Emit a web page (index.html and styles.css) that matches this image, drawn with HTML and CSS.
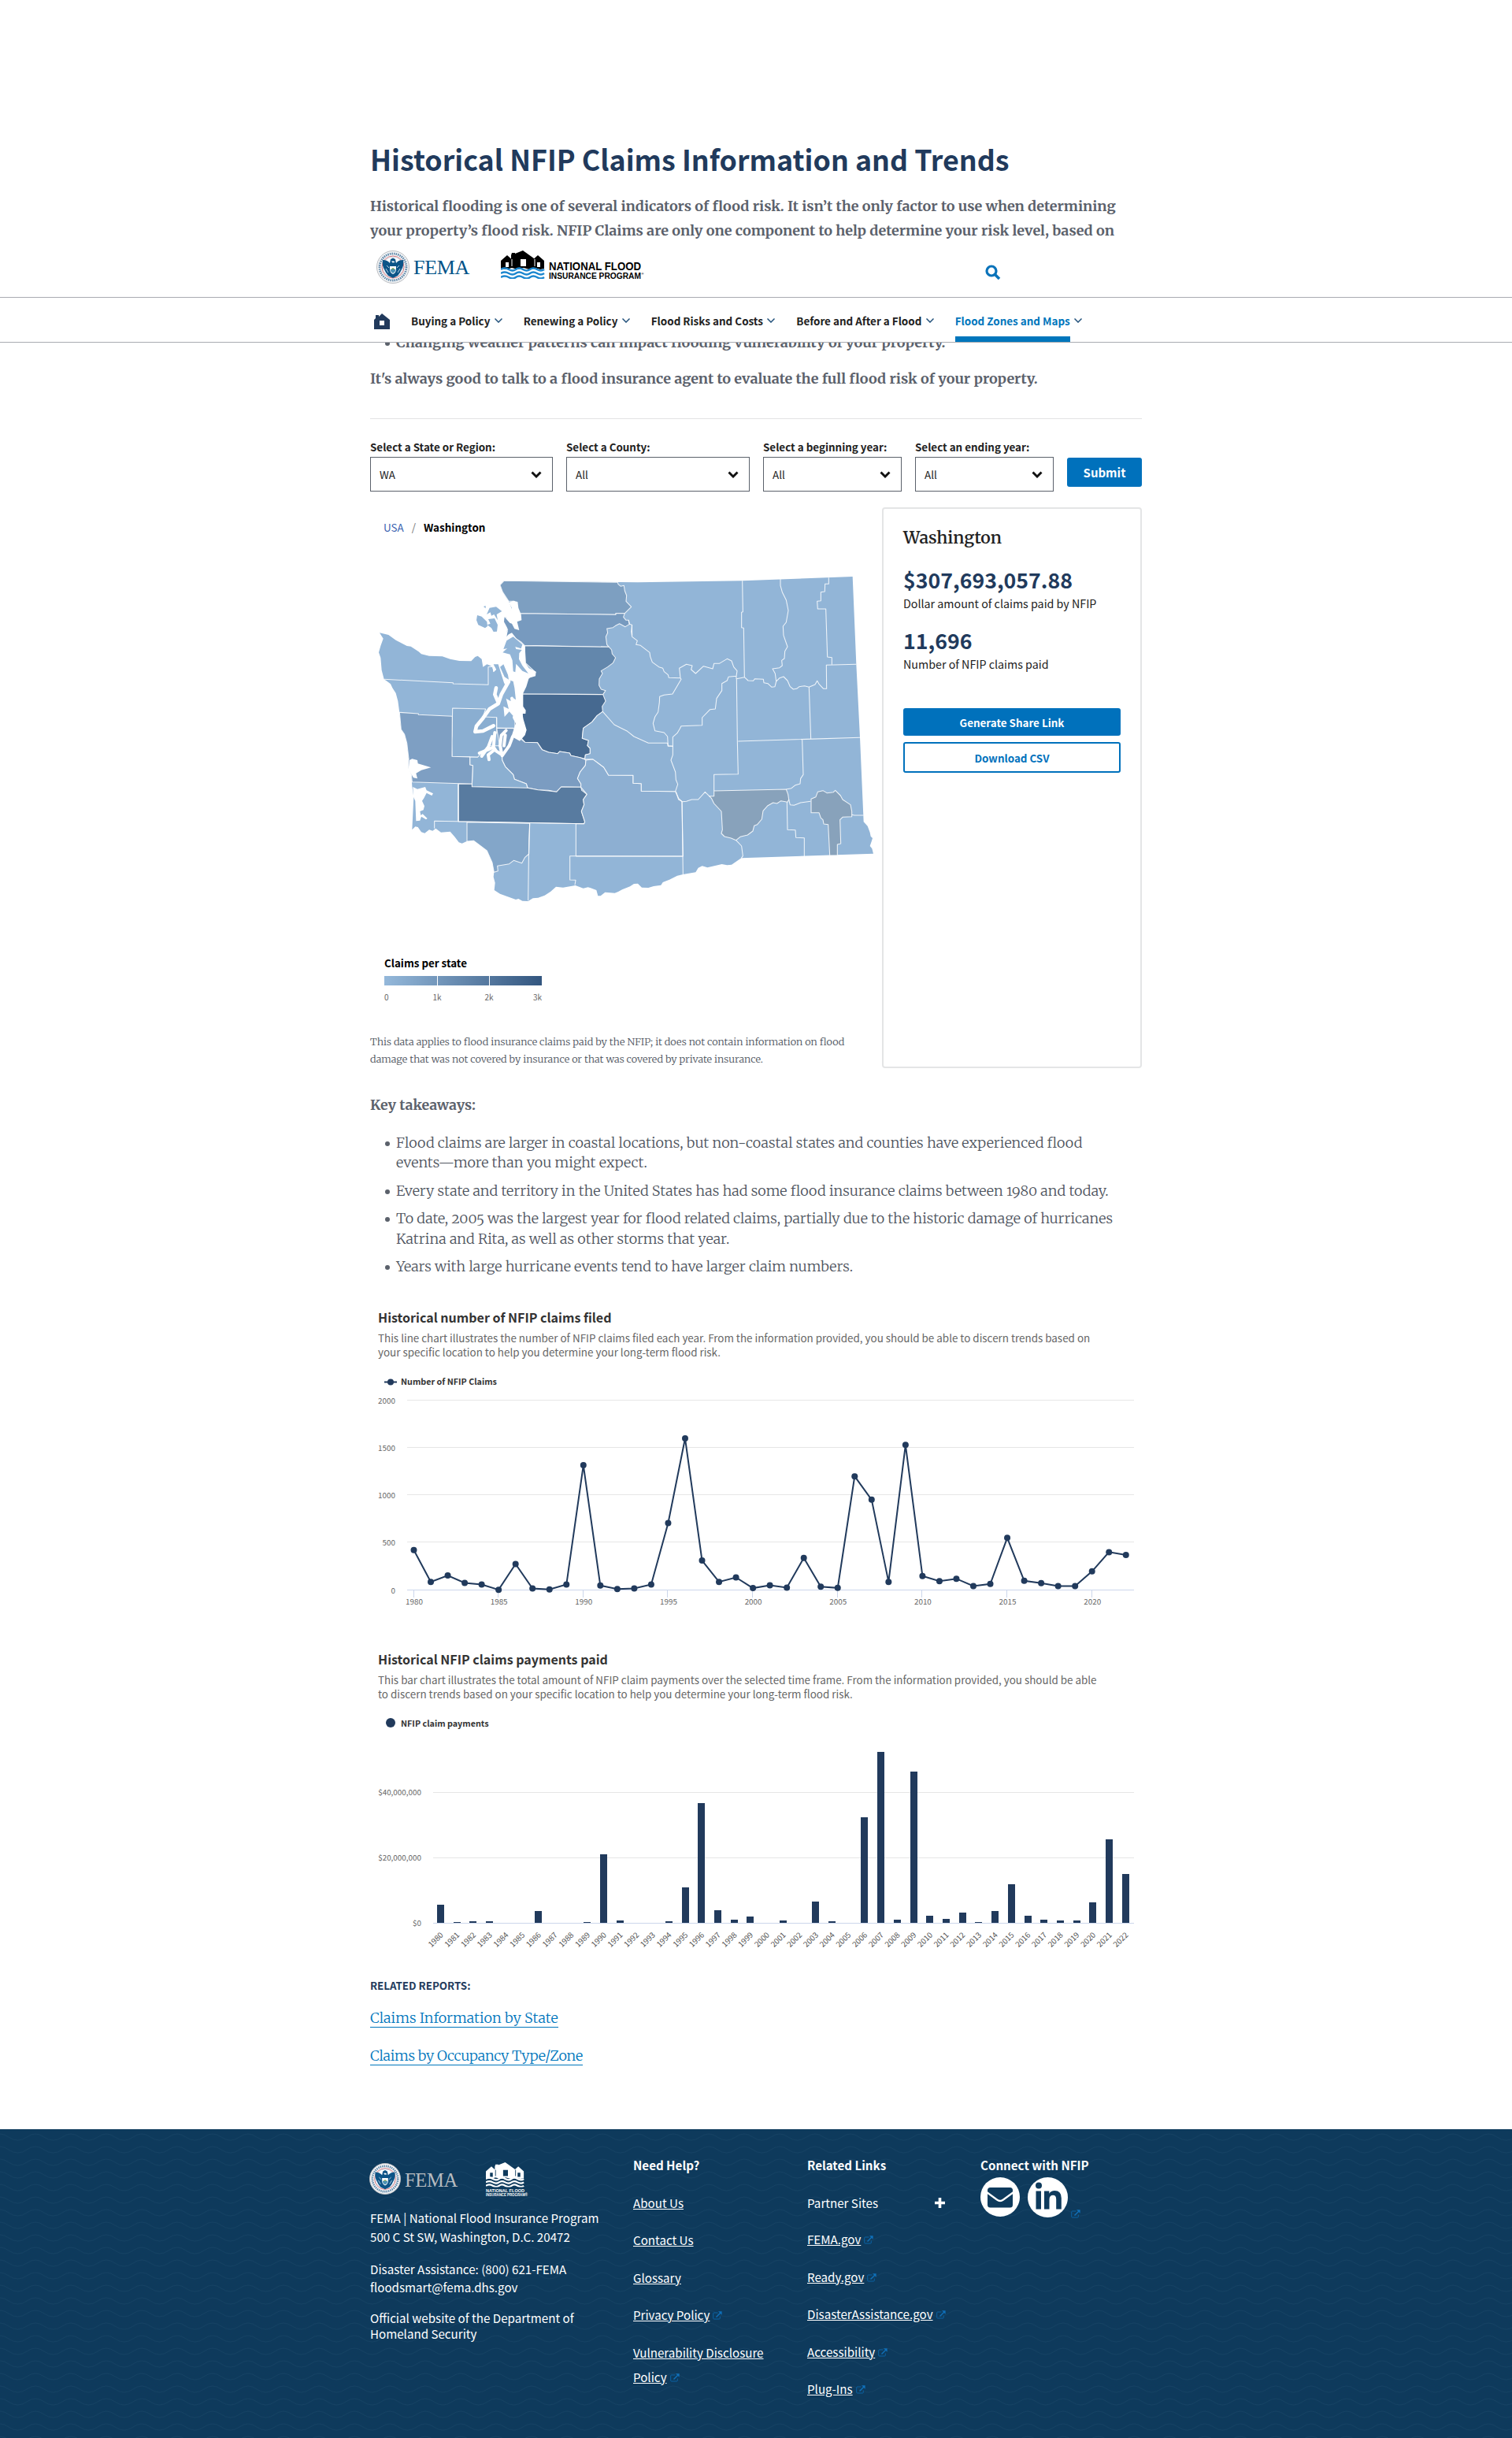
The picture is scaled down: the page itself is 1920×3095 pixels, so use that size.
FILE: index.html
```html
<!DOCTYPE html>
<html lang="en">
<head>
<meta charset="utf-8">
<title>Historical NFIP Claims Information and Trends</title>
<link rel="stylesheet" href="styles.css">
</head>
<body>
<svg width="0" height="0" class="defs" aria-hidden="true">
  <defs>
    <symbol id="seal" viewBox="0 0 42 42">
      <circle cx="21" cy="21" r="20.500" fill="#f4f5f6" stroke="#b9bcc0"/>
      <circle cx="21" cy="21" r="17" fill="none" stroke="#5d86a8" stroke-width="2.800" stroke-dasharray="1.500 1.100"/>
      <circle cx="21" cy="21" r="14" fill="#fff" stroke="#d0545c" stroke-width=".8"/>
      <circle cx="21" cy="21" r="12.800" fill="#fff" stroke="#8fb0c8" stroke-width=".5"/>
      <path d="M8 12q6 0 9 4l1-5 3-1.500 3 1.500 1 5q3-4 9-4 1 6-1 10l-3 6-3 4-6 3-6-3-3-4-3-6q-2-4-1-10z" fill="#0c5487"/>
      <path d="M12 23l3 5M30 23l-3 5M13 19l3 3M29 19l-3 3" stroke="#c7dbe8" stroke-width=".9"/>
      <path d="M17 20h8v5q-1 4-4 5-3-1-4-5z" fill="#fff"/>
      <path d="M17.500 24h7l-1 3-2.500 2-2.500-2z" fill="#4b92b5"/>
      <path d="M18.500 24l2.500-2 2.500 2z" fill="#6f9a4e"/>
      <path d="M19 13.500h3l1.500 1.500-3 .5z" fill="#fff"/>
    </symbol>
    <symbol id="houses" viewBox="0 0 56 36">
      <path d="M0 23V13l8-7 5 4.500V6l1-3h4v1l10-4 14 10v.5l5-4.500 8 7v10l-5 1-7-2-7 2-7-2-8 2-7-2-7 2z" fill="var(--ink)"/>
      <path d="M14 11v9M43 11v9" stroke="var(--gap)" stroke-width="1"/>
      <path d="M25 11h7v9h-7zM6 15h4v6H6zM46 15h4v6h-4z" fill="var(--gap)"/>
      <g fill="none" stroke="var(--wave)" stroke-width="2.500">
        <path d="M0 24q5-3 10 0t9 0 9 0 9 0 9 0 9 0"/>
        <path d="M0 29q5-3 10 0t9 0 9 0 9 0 9 0 9 0"/>
        <path d="M0 34q5-3 10 0t9 0 9 0 9 0 9 0 9 0"/>
      </g>
    </symbol>
    <symbol id="chev" viewBox="0 0 10 6"><path d="M.5.5L5 5 9.500.5" fill="none" stroke="#23527c" stroke-width="1.500"/></symbol>
    <symbol id="caret" viewBox="0 0 14 9"><path d="M1.500 1.500L7 7l5.500-5.500" fill="none" stroke="#111" stroke-width="2.900"/></symbol>
    <symbol id="ext" viewBox="0 0 12 11"><path d="M6.500 2H1.700Q.7 2 .7 3v6q0 1 1 1h6.600q1 0 1-1V6.500" fill="none" stroke="#0b62a3" stroke-width="1"/><path d="M4.500 7.500L10 2" stroke="#0f70ba" stroke-width="1.400"/><path d="M7 .2h4.600v4.600z" fill="#0f70ba"/></symbol>
  </defs>
</svg>

<header class="site-header">
  <div class="brand">
    <svg class="seal"><use href="#seal"/></svg>
    <span class="fema">FEMA</span>
    <svg class="houses"><use href="#houses"/></svg>
    <svg class="nfip" width="124" height="26"><text x="0" y="11.500" font-size="15" textLength="117" lengthAdjust="spacingAndGlyphs">NATIONAL FLOOD</text><text x="0" y="22.500" font-size="10.600" textLength="117" lengthAdjust="spacingAndGlyphs">INSURANCE PROGRAM</text><text x="117.500" y="18" font-size="4">®</text></svg>
    <svg class="search" viewBox="0 0 20 20"><circle cx="8" cy="8" r="6" fill="none" stroke="#0a73ba" stroke-width="3.200"/><path d="M12.500 12.500l5.500 5.500" stroke="#0a73ba" stroke-width="3.600"/></svg>
  </div>
  <nav class="nav">
    <svg class="home" viewBox="0 0 20 20"><path d="M0 20V8l2-2V2h4v2l4-4 10 8v12zM7 9v6h6V9z" fill="#213a5c" fill-rule="evenodd"/></svg>
    <a>Buying a Policy</a><svg class="chev"><use href="#chev"/></svg>
    <a>Renewing a Policy</a><svg class="chev"><use href="#chev"/></svg>
    <a>Flood Risks and Costs</a><svg class="chev"><use href="#chev"/></svg>
    <a>Before and After a Flood</a><svg class="chev"><use href="#chev"/></svg>
    <a class="active">Flood Zones and Maps</a><svg class="chev"><use href="#chev"/></svg>
  </nav>
</header>

<main class="page">
  <h1>Historical NFIP Claims Information and Trends</h1>
  <p class="intro">Historical flooding is one of several indicators of flood risk. It isn’t the only factor to use when determining<br>your property’s flood risk. NFIP Claims are only one component to help determine your risk level, based on</p>
  <ul class="factors"><li>Changing weather patterns can impact flooding vulnerability of your property.</li></ul>
  <p class="intro">It's always good to talk to a flood insurance agent to evaluate the full flood risk of your property.</p>
  <hr>

  <form class="filters">
    <label>Select a State or Region:<span class="select">WA<svg><use href="#caret"/></svg></span></label>
    <label>Select a County:<span class="select">All<svg><use href="#caret"/></svg></span></label>
    <label>Select a beginning year:<span class="select">All<svg><use href="#caret"/></svg></span></label>
    <label>Select an ending year:<span class="select">All<svg><use href="#caret"/></svg></span></label>
    <button type="button" class="submit">Submit</button>
  </form>

  <section class="explorer">
    <div class="map-side">
      <div class="crumbs"><a>USA</a><i>/</i><b>Washington</b></div>
      <svg class="map" viewBox="0 0 1950 1380">
        <path class="c0" stroke="none" d="M510 112L1020 118 1418 112 1838 96 1852 430 1866 709 1880 1030 1895 1046 1904 1070 1907 1085 1914 1092 1910 1105 1904 1122 1912 1132 1917 1151 1414 1168 1377 1193 1360 1195 1340 1191 1285 1204 1265 1198 1250 1205 1240 1222 1192 1230 1170 1235 1140 1250 1115 1260 1108 1271 1080 1275 1060 1281 1035 1280 1020 1265 1005 1266 990 1276 960 1288 945 1296 932 1301 895 1298 878 1312 868 1312 862 1290 840 1282 830 1279 812 1283 782 1272 752 1277 735 1280 708 1277 688 1295 665 1310 640 1319 620 1321 602 1332 580 1331 565 1323 555 1326 495 1304 473 1290 476 1262 470 1240 472 1222 468 1188 445 1140 420 1117 395 1102 368 1104 350 1112 338 1108 322 1087 305 1067 270 1070 250 1055 238 1064 225 1060 208 1073 195 1069 182 1050 172 1048 160 1060 166 935 160 895 157 850 146 825 147 790 140 730 131 697 118 678 112 615 106 570 98 540 85 520 78 505 65 495 53 487 44 452 40 405 33 385 40 360 50 332 36 310 70 318 98 338 140 360 155 362 185 382 195 391 225 398 275 400 305 410 340 417 385 418 400 402 410 398 425 410 430 440 445 430 465 438 470 460 480 450 470 430 490 430 500 410 505 350 525 325 520 300 510 262 540 220 528 190 520 180 505 155 495 128z"/>
        <g class="counties">
          <path fill="#7d9fc1" d="M510 112L943 118 945 125 955 133 967 130 970 150 977 168 975 190 995 211 970 236 936 236 936 241 566 236 550 190 528 190 505 155 495 128z"/>
          <path fill="#779abf" d="M566 236L936 241 936 236 970 236 965 250 975 262 985 262 988 277 972 287 950 275 935 283 925 290 902 294 905 310 898 325 902 355 910 364 588 358 575 345 545 325 520 320 525 300 510 262 540 270z"/>
          <path fill="#6387ac" d="M588 359L910 364 920 375 922 390 935 405 925 425 905 440 880 455 885 465 873 485 872 510 880 525 897 530 887 545 580 543 583 500 605 482 630 460 592 425 590 390z"/>
          <path fill="#466990" d="M580 543L887 545 897 570 884 590 886 610 865 625 845 650 812 673 808 712 832 720 828 740 838 750 838 770 820 775 818 790 800 785 765 778 760 768 722 762 715 770 680 765 655 755 637 728 590 727 575 710 550 705 552 640 580 640z"/>
          <path fill="#7b9cc1" d="M575 715L590 727 637 728 655 755 680 765 715 770 722 762 760 768 765 778 800 785 818 792 822 795 820 815 800 840 790 865 803 885 803 898 728 897 710 916 680 910 640 908 600 900 595 885 550 868 545 850 515 820 503 795 503 780 490 720 482 673 548 674z"/>
          <path fill="#8bafd1" d="M380 783L410 783 440 740 500 740 503 795 515 820 545 850 550 868 595 885 600 902 388 896 391 815 380 813z"/>
          <path fill="#8aaed1" d="M314 597L440 600 430 630 482 632 482 690 450 740 410 783 312 781 310 720 312 700z"/>
          <path fill="#7e9fc3" d="M112 613L184 618 184 622 313 628 312 781 380 783 380 813 391 815 388 886 160 878 157 850 146 825 147 790 140 730 131 697 118 678z"/>
          <path fill="#587ba0" d="M337 886L388 886 388 896 600 901 640 908 680 912 710 916 728 897 803 898 806 910 826 925 812 945 815 965 805 990 818 1030 815 1037 337 1029z"/>
          <path fill="#83a6c9" d="M369 1031L608 1036 605 1152 590 1165 578 1187 547 1177 530 1190 485 1198 487 1217 472 1222 465 1185 445 1140 395 1102 369 1104z"/>
          <path fill="#8dafd2" d="M822 795L848 791 890 822 908 852 1002 853 1002 883 1033 884 1033 913 1163 914 1175 940 1188 953 1192 1161 784 1160 784 1037 815 1037 818 1030 805 990 815 965 812 945 826 925 803 898 803 885 790 865 800 840 820 815z"/>
          <path fill="#8fb2d4" d="M886 610L930 660 960 675 980 685 1005 705 1020 712 1060 730 1133 730 1135 742 1153 742 1153 775 1146 795 1163 840 1165 870 1172 887 1163 914 1033 913 1033 884 1002 883 1002 853 908 852 890 822 848 791 818 792 820 775 838 770 838 750 828 740 832 720 808 712 812 673 845 650 865 625z"/>
          <g transform="translate(930)" fill="#88a2bb">
            <path d="M362 932L380 932 380 912 655 906 662 925 665 945 660 955 635 950 620 960 605 957 585 968 567 988 562 1020 545 1040 533 1045 528 1065 508 1080 480 1087 464 1100 445 1092 420 1086 408 1074 412 1060 408 990 380 960 370 940z"/>
            <path d="M750 943L768 935 775 916 795 911 810 920 835 917 842 910 862 930 870 945 900 965 905 990 905 1010 870 1012 860 1022 863 1113 850 1116 850 1157 821 1158 815 1040 798 1038 795 1022 787 1015 780 995 750 995z"/>
          </g>
        </g>
        <g class="lines">
          <path d="M53 487L316 500 316 504 450 508 450 440 465 438M335 886V1028M245 1055V1027L815 1037M608 1036L605 1100 602 1330M784 1160H761V1251L783 1252 780 1270M482 632V673H548M984 262L988 277 997 280 998 320"/>
          <g transform="translate(930)">
            <path d="M68 280L65 305 68 325 88 340 83 355 100 358 135 385 137 400 145 422 170 440 185 445 190 458 205 470 208 481 252 482M488 112L490 230 485 232 485 290 493 292 496 479 466 485 469 722 472 848 380 850V912"/>
            <path d="M633 105V130L640 155 655 185 663 225 655 270 643 285 645 320 660 363 650 380 648 408 638 415 640 435 630 443 603 447 613 465 617 495 612 515 600 517 585 503 570 500 568 487 535 485 530 493 510 492 496 479M617 495L630 482 645 477 660 492 670 515 682 525 695 523 705 515 725 512 742 517 765 507 773 493 780 505 797 523H809L808 433 922 430M742 517L749 715M472 723L936 709M716 718L720 850 710 865 708 885 690 890 675 902 655 906"/>
            <path d="M817 100V124H803L802 153 787 155V188L773 190 775 219H806L812 402 829 404V431"/>
            <path d="M252 482L248 445 275 430 297 435 293 450 310 465 340 437 375 447 380 427 400 427 430 409 447 417 455 440 468 455 465 475 435 478 430 492 410 503 410 530 390 560 385 600 365 602 335 633 335 662 255 665 250 675 240 692 223 707 223 742 205 740 203 705 190 690 155 683 148 655 155 630 167 612 172 575 173 553 190 547 222 543 240 512 255 487zM465 475V485M235 915L245 945 260 953 275 952 295 945 320 945 346 916 365 935M258 953L262 1230M262 1161H-146M464 1100L485 1122 490 1160 484 1168M658 955L660 1060 690 1061 692 1090 724 1091V1162M665 945L670 965 685 967 710 957 748 952M905 1003L915 1005H950"/>
          </g>
        </g>
        <g fill="#fff">
          <path d="M528 195L545 188 562 192 565 215 575 240 577 262 560 268 568 300 550 295 540 275 525 270 510 262 520 250 495 245 525 235 508 205 520 203 535 225 540 215z"/>
          <path d="M485 290L520 270 522 300 515 322 540 310 560 335 590 360 592 425 605 445 632 458 630 475 605 482 595 515 583 540 583 590 593 605 592 618 580 618 584 640 596 680 590 700 570 722 545 708 540 700 556 650 550 632 530 610 512 630 508 590 528 600 518 560 535 570 540 555 555 565 550 520 545 495 530 490 520 520 510 500 488 430 495 405 470 420 455 400 430 408 425 330z"/>
          <path d="M150 795L160 790 180 795 182 808 232 823 195 833 175 845 180 865 165 862 155 845 146 830z"/>
          <path d="M163 897L180 905 210 897 215 910 240 922 235 930 215 920 205 940 198 950 207 970 203 985 190 990 193 1005 200 1000 218 1017 213 1021 195 1010 190 1025 175 1027 172 950 165 935z"/>
          <path d="M455 440L465 435 470 460 480 450 475 440z"/>
        </g>
        <g fill="none" stroke="#fff" stroke-linejoin="round" stroke-linecap="round">
          <path stroke-width="14" d="M528 495L500 545 488 580 455 600 430 635 405 665 400 687 430 684 470 664M488 575L475 545 480 520M550 632L565 660 575 690"/>
          <path stroke-width="12" d="M543 705L530 740 503 778 495 740 500 700 518 682M503 775L480 760 470 745 475 690M470 745L450 755 416 768M470 758L450 775 453 793M465 705L450 745 425 780M515 700L510 740M540 560L560 610"/>
        </g>
        <g class="c0">
          <path d="M505 385L530 362 552 360 556 372 578 375 568 388 567 410 580 435 603 465 580 455 556 428 553 460 545 457 542 415 533 392z"/>
          <path d="M508 372L520 340 545 325 580 355 575 370 550 362 530 368z"/>
          <path d="M495 440L508 430 525 470 528 488 512 478z"/>
          <path d="M408 243L425 248 445 268 447 285 438 292 412 280 405 262zM455 215L480 211 502 228 482 240 486 262 472 240 462 245 458 232 444 240zM450 258L474 255 486 280 483 305 470 306 462 292 446 280 458 275zM432 210L440 207 440 217z"/>
          <path fill="#779abf" d="M512 250L530 270 545 300 535 305 520 325 526 298 510 268z"/>
        </g>
      </svg>
      <div class="legend-title">Claims per state</div>
      <div class="legend-bar"><span></span><span></span><span></span></div>
      <div class="legend-ticks"><span>0</span><span>1k</span><span>2k</span><span>3k</span></div>
      <p class="note">This data applies to flood insurance claims paid by the NFIP; it does not contain information on flood<br>damage that was not covered by insurance or that was covered by private insurance.</p>
    </div>
    <aside class="card">
      <h2>Washington</h2>
      <div class="stat">$307,693,057.88</div><div class="cap">Dollar amount of claims paid by NFIP</div>
      <div class="stat">11,696</div><div class="cap">Number of NFIP claims paid</div>
      <button type="button" class="btn">Generate Share Link</button>
      <button type="button" class="btn outline">Download CSV</button>
    </aside>
  </section>

  <p class="key">Key takeaways:</p>
  <ul class="takeaways">
    <li>Flood claims are larger in coastal locations, but non-coastal states and counties have experienced flood<br>events—more than you might expect.</li>
    <li>Every state and territory in the United States has had some flood insurance claims between 1980 and today.</li>
    <li>To date, 2005 was the largest year for flood related claims, partially due to the historic damage of hurricanes<br>Katrina and Rita, as well as other storms that year.</li>
    <li>Years with large hurricane events tend to have larger claim numbers.</li>
  </ul>

  <section class="chart">
    <h3>Historical number of NFIP claims filed</h3>
    <p>This line chart illustrates the number of NFIP claims filed each year. From the information provided, you should be able to discern trends based on<br>your specific location to help you determine your long-term flood risk.</p>
    <svg id="line-chart" width="980" height="310"></svg>
  </section>
  <section class="chart second">
    <h3>Historical NFIP claims payments paid</h3>
    <p>This bar chart illustrates the total amount of NFIP claim payments over the selected time frame. From the information provided, you should be able<br>to discern trends based on your specific location to help you determine your long-term flood risk.</p>
    <svg id="bar-chart" width="980" height="320"></svg>
  </section>

  <h4>RELATED REPORTS:</h4>
  <div class="reports"><a>Claims Information by State</a><a>Claims by Occupancy Type/Zone</a></div>
</main>

<footer class="footer">
  <svg class="waves" width="100%" height="100%" aria-hidden="true"><defs><pattern id="w" width="45" height="16" patternUnits="userSpaceOnUse"><path d="M0 6q5.500 0 11 4t11.500 4 11.500-4 11-4" fill="none" stroke="#154263" stroke-width="1"/></pattern></defs><rect width="100%" height="100%" fill="url(#w)"/></svg>
  <div class="footer-grid">
    <div class="about">
      <div class="footer-logos">
        <svg class="seal"><use href="#seal"/></svg><span class="fema">FEMA</span>
        <svg class="nfip-stack" viewBox="0 0 56 43" width="56" height="43"><use href="#houses" width="49" height="31.500"/><text x="0" y="37.500" font-size="6" textLength="49" lengthAdjust="spacingAndGlyphs">NATIONAL FLOOD</text><text x="0" y="42.500" font-size="4.600" textLength="53" lengthAdjust="spacingAndGlyphs">INSURANCE PROGRAM®</text></svg>
      </div>
      <p class="l24">FEMA | National Flood Insurance Program<br>500 C St SW, Washington, D.C. 20472</p>
      <p class="l23">Disaster Assistance: (800) 621-FEMA<br>floodsmart@fema.dhs.gov</p>
      <p class="l20">Official website of the Department of<br>Homeland Security</p>
    </div>
    <div class="col">
      <b>Need Help?</b>
      <div><a>About Us</a></div><div><a>Contact Us</a></div><div><a>Glossary</a></div>
      <div><a>Privacy Policy</a><svg class="ext"><use href="#ext"/></svg></div>
      <div><a>Vulnerability Disclosure<br>Policy</a><svg class="ext"><use href="#ext"/></svg></div>
    </div>
    <div class="col">
      <b>Related Links</b>
      <div class="partner">Partner Sites<svg viewBox="0 0 13 13" width="13" height="13"><path d="M6.500 0v13M0 6.500h13" stroke="#fff" stroke-width="3.600"/></svg></div>
      <div><a>FEMA.gov</a><svg class="ext"><use href="#ext"/></svg></div>
      <div><a>Ready.gov</a><svg class="ext"><use href="#ext"/></svg></div>
      <div><a>DisasterAssistance.gov</a><svg class="ext"><use href="#ext"/></svg></div>
      <div><a>Accessibility</a><svg class="ext"><use href="#ext"/></svg></div>
      <div><a>Plug-Ins</a><svg class="ext"><use href="#ext"/></svg></div>
    </div>
    <div class="connect">
      <b>Connect with NFIP</b>
      <div class="social">
        <svg viewBox="0 0 50 50" width="50" height="50"><circle cx="25" cy="25" r="25" fill="#fff"/><rect x="9" y="13" width="32" height="25.500" rx="3.500" fill="#0e3a5c"/><path d="M8 19l13 9.500q4 3 8 0L42 19" fill="none" stroke="#fff" stroke-width="2.200"/></svg>
        <svg viewBox="0 0 51 51" width="51" height="51"><circle cx="25.500" cy="25.500" r="25.500" fill="#fff"/><circle cx="14" cy="10.500" r="4" fill="#0e3a5c"/><path d="M10.500 17.500h6.500v23h-6.500zM21 17.500h6.300v3.200q2.200-3.700 7-3.700 8.500 0 8.500 9.500v14h-6.600V28q0-5.300-4-5.300-4.700 0-4.700 5.500v12.300H21z" fill="#0e3a5c"/></svg>
        <svg class="ext"><use href="#ext"/></svg>
      </div>
    </div>
  </div>
</footer>
<script src="charts.js"></script>
</body>
</html>
```
FILE: styles.css
```css
:root { --sans: "Noto Sans CJK SC", "Open Sans", sans-serif; --serif: "Merriweather", "DejaVu Serif", serif; --navy: #213a5c; --blue: #0071bc; }
* { box-sizing: border-box; }
body { margin: 0; position: relative; background: #fff; color: #212121; font-family: var(--sans); }
h1, h2, h3, h4, p, ul { margin: 0; padding: 0; }
ul { list-style: none; }
.defs { position: absolute; }

/* floating header */
.site-header { position: absolute; top: 308px; left: 0; width: 100%; height: 127px; background: #fff; border-bottom: 1px solid #a9abb1; z-index: 2; }
.brand { display: flex; height: 70px; width: 980px; margin: 0 auto; padding: 10px 0 0 8px; border: 0; --ink: #000; --gap: #fff; --wave: #1c87cf; }
.seal { width: 42px; height: 42px; }
.fema { font-family: "Liberation Serif", serif; color: #005288; font-size: 26px; line-height: 30px; margin: 7px 0 0 5px; width: 70px; letter-spacing: -.3px; }
.brand .houses { width: 56px; height: 36px; margin: 0 0 0 41px; }
.brand .nfip { margin: 13px 0 0 5px; font-family: "Liberation Sans", sans-serif; font-weight: bold; overflow: visible; }
.search { width: 20px; height: 20px; margin: 18px 0 0 430px; }
.nav { display: flex; height: 57px; padding-left: calc(50% - 485px); border-top: 1px solid #a9abb1; margin-top: -1px; }
.nav .home { width: 20px; height: 20px; margin: 20px 27px 0 0; }
.nav a { font-weight: bold; font-size: 13.440px; line-height: 20px; margin-top: 19px; height: 37px; white-space: nowrap; }
.nav .chev { width: 10px; height: 6px; margin: 26px 27px 0 5.300px; }
.nav .active { color: #0076bc; border-bottom: 7px solid #0076bc; height: 37px; }

.page { width: 980px; margin: 0 auto; padding-top: 179px; height: 2703px; }
h1 { font-size: 35.800px; line-height: 44px; color: var(--navy); white-space: nowrap; }
.intro, .factors, .key { font-family: var(--serif); font-weight: 700; color: #5b616b; font-size: 18px; line-height: 31px; white-space: nowrap; }
.intro { margin-top: 23px; }
.factors { margin-top: 114px; line-height: 26px; }
.factors + .intro { margin-top: 17px; }
li { position: relative; padding-left: 33px; }
li::before { content: ""; position: absolute; left: 19px; top: 11px; width: 6px; height: 6px; border-radius: 50%; background: #5b616b; }
hr { border: 0; border-top: 1px solid #e2e3e4; margin: 35px 0 26px; }

.filters { display: grid; grid-template-columns: 232px 233px 176px 176px 95px; gap: 17px; }
.filters label { font-weight: bold; font-size: 13.400px; line-height: 18px; white-space: nowrap; }
.select { display: flex; justify-content: space-between; align-items: center; height: 44px; margin-top: 4px; padding: 0 13px 0 11px; border: 1px solid #5b616b; font-weight: normal; line-height: 20px; }
.select svg { width: 14px; height: 9px; }
.submit { border: 0; border-radius: 3px; background: var(--blue); color: #fff; font: bold 15px/20px var(--sans); height: 37px; margin-top: 23px; padding: 0; }

.explorer { display: grid; grid-template-columns: 650px 330px; height: 710px; margin-top: 20px; }
.crumbs { display: flex; padding: 15px 0 0 17px; font-size: 13.450px; line-height: 20px; color: #000; }
.crumbs a { color: #3a62b0; }
.crumbs i { font-style: normal; color: #777; margin: 0 10px; }
.map { display: block; width: 650px; height: 460px; margin-top: 21px; }
.c0 { fill: #92b5d7; }
.counties, .lines { stroke: #fff; stroke-opacity: .85; stroke-width: 3.200; stroke-linejoin: round; }
.lines { fill: none; }
.legend-title { margin: 54px 0 0 18px; font-weight: bold; font-size: 13.350px; line-height: 18px; color: #000; }
.legend-bar { display: grid; grid-template-columns: repeat(3, 1fr); width: 200px; height: 12px; margin: 7px 0 0 18px; background: linear-gradient(90deg, #94b8da, #33567f); }
.legend-bar span + span { border-left: 1px solid #fff; }
.legend-ticks { display: grid; grid-template-columns: 34px 66px 66px 34px; width: 200px; margin: 8px 0 0 18px; font-size: 10px; line-height: 14px; color: #666; text-align: center; }
.legend-ticks span:first-child { text-align: left; }
.legend-ticks span:last-child { text-align: right; }
.note { margin-top: 39px; font-family: var(--serif); font-weight: 300; font-size: 12.680px; line-height: 22px; color: #4d535d; white-space: nowrap; }

.card { border: 2px solid #e4e5e6; border-radius: 4px; padding: 23px 25px 0; }
.card h2 { font-family: var(--serif); font-weight: 600; font-size: 21.200px; line-height: 28px; }
.stat { font-weight: bold; font-size: 26.700px; line-height: 36px; color: var(--navy); margin-top: 21px; }
.cap { font-size: 14.280px; line-height: 20px; margin-top: 2px; margin-bottom: -2px; white-space: nowrap; }
.btn { display: block; width: 276px; height: 35px; border: 0; border-radius: 3px; background: var(--blue); color: #fff; font: bold 13.400px/20px var(--sans); margin-top: 48px; padding: 0; }
.btn.outline { height: 39px; margin-top: 8px; background: #fff; color: var(--blue); border: 2px solid var(--blue); }

.key { margin-top: 34px; line-height: 30px; font-size: 17.800px; }
.takeaways { margin-top: 20px; font-family: var(--serif); font-weight: 300; font-size: 18px; line-height: 25.400px; color: #4f5560; white-space: nowrap; font-variant-numeric: oldstyle-nums; }
.takeaways li + li { margin-top: 10px; }

.chart { margin-top: 41px; }
.chart h3 { padding-left: 10px; font-size: 16.050px; line-height: 22px; color: #333; }
.chart p { padding-left: 10px; margin-top: 6px; font-size: 13.420px; line-height: 18px; color: #666; white-space: nowrap; }
.chart svg { display: block; margin-top: 15px; }
.chart.second { margin-top: 45px; }
.chart.second svg { margin-top: 11px; }
.axis { font-size: 9.900px; fill: #666; }
.tilt { fill: #555; }
.leg { font-size: 10.760px; font-weight: bold; fill: #333; }

h4 { margin-top: 22px; font-size: 13.350px; line-height: 18px; color: var(--navy); }
.reports { display: flex; flex-direction: column; align-items: flex-start; gap: 25px; margin-top: 21px; }
.reports a { font-family: var(--serif); font-weight: 300; font-size: 18px; line-height: 22px; color: #0076bc; border-bottom: 1px solid #0076bc; }
.reports a:last-child { letter-spacing: -.28px; }

.footer { position: relative; height: 392px; background: #0e3a5c; color: #fff; font-size: 15.150px; }
.waves { position: absolute; inset: 0; }
.footer-grid { position: relative; display: grid; grid-template-columns: 334px 221px 220px 205px; width: 980px; margin: 0 auto; }
.footer-logos { display: flex; height: 86px; padding-top: 42px; --ink: #fff; --gap: #0e3a5c; --wave: #fff; }
.footer-logos .seal { width: 40px; height: 40px; margin: 1px 0 0 -1px; }
.footer-logos .fema { color: #b7bcc0; font-size: 24.500px; margin: 8px 0 0 5px; width: 66px; }
.nfip-stack { margin-left: 37px; font-family: "Liberation Sans", sans-serif; font-weight: bold; fill: #fff; flex: none; overflow: visible; }
.about p { white-space: nowrap; }
.l24 { line-height: 24px; margin-top: 14px; }
.about .l23 { line-height: 23.500px; margin-top: 17.500px; }
.about .l20 { line-height: 20px; margin-top: 16.500px; }
.col, .connect { padding-top: 32px; line-height: 24px; }
.col > b, .connect > b { display: block; line-height: 26px; }
.col > div { line-height: 31px; margin-top: 16.500px; white-space: nowrap; }
.col a { text-decoration: underline; }
.col > b + div { margin-top: 19.500px; }
.col > .partner { display: flex; align-items: center; justify-content: space-between; width: 175px; margin-top: 20px; }
.col > .partner + div { margin-top: 15px; }
.ext { width: 12px; height: 11px; margin-left: 4px; }
.social { display: flex; align-items: flex-start; margin-top: 3px; gap: 10px; }
.social .ext { margin: 41px 0 0 -6px; }
```
FILE: charts.js
```js
const claims = [422,86,153,75,58,3,275,17,6,58,1317,47,11,17,58,706,1600,311,86,133,20,50,25,339,36,22,1200,953,86,1531,147,94,119,42,64,550,97,72,42,42,197,400,369];
// payments in millions of dollars
const paid = [5.5,.3,.5,.5,.02,0,3.6,0,0,.3,21,.7,0,0,.5,10.8,36.7,3.9,1,1.9,.05,.7,.05,6.5,.5,.05,32.4,52.4,1,46.3,2.2,1.2,3.1,.3,3.6,11.8,2.2,1,.7,.7,6.3,25.6,15];

function drawLine() {
  const base = 278.5, x = i => 55.5 + 21.53 * i, y = v => base - v * 0.1203;
  let s = '<path d="M18 14.500h16" stroke="#213a5c" stroke-width="2"/><circle cx="26" cy="14.500" r="4" fill="#213a5c"/><text class="leg" x="39" y="18">Number of NFIP Claims</text>';
  for (let v = 0; v <= 2000; v += 500) {
    const gy = Math.round(y(v)) - 0.5;
    s += `<path d="M47 ${gy}H970" stroke="${v ? '#e6e6e6' : '#ccd6eb'}"/><text class="axis" x="32" y="${gy + 4}" text-anchor="end">${v}</text>`;
  }
  for (let i = 0; i < 43; i += 5) s += `<path d="M${Math.round(x(i)) - .5} 278v10" stroke="#ccd6eb"/><text class="axis" x="${x(i) + .5}" y="297" text-anchor="middle">${1980 + i}</text>`;
  s += `<polyline points="${claims.map((v, i) => x(i) + ',' + y(v)).join(' ')}" fill="none" stroke="#213a5c" stroke-width="2"/>`;
  claims.forEach((v, i) => { s += `<circle cx="${x(i)}" cy="${y(v)}" r="4" fill="#213a5c"/>`; });
  document.getElementById('line-chart').innerHTML = s;
}

function drawBars() {
  const base = 271, x = i => 89.5 + 20.71 * i;
  let s = '<circle cx="26" cy="17" r="6" fill="#213a5c"/><text class="leg" x="39" y="21.500">NFIP claim payments</text>';
  [[0, '$0'], [20, '$20,000,000'], [40, '$40,000,000']].forEach(([v, t]) => {
    const gy = Math.round(base - v * 4.145) + .5;
    s += `<path d="M80 ${gy}H970" stroke="${v ? '#e6e6e6' : '#ccd6eb'}"/><text class="axis" x="65" y="${gy + 3.5}" text-anchor="end">${t}</text>`;
  });
  paid.forEach((v, i) => {
    const h = Math.round(v * 4.145);
    s += `<rect x="${Math.round(x(i) - 4.5)}" y="${base - h}" width="9" height="${h}" fill="#213a5c"/>`;
    s += `<text class="axis tilt" text-anchor="end" transform="translate(${x(i) + 4} 287) rotate(-45)">${1980 + i}</text>`;
  });
  document.getElementById('bar-chart').innerHTML = s;
}

drawLine();
drawBars();
```
